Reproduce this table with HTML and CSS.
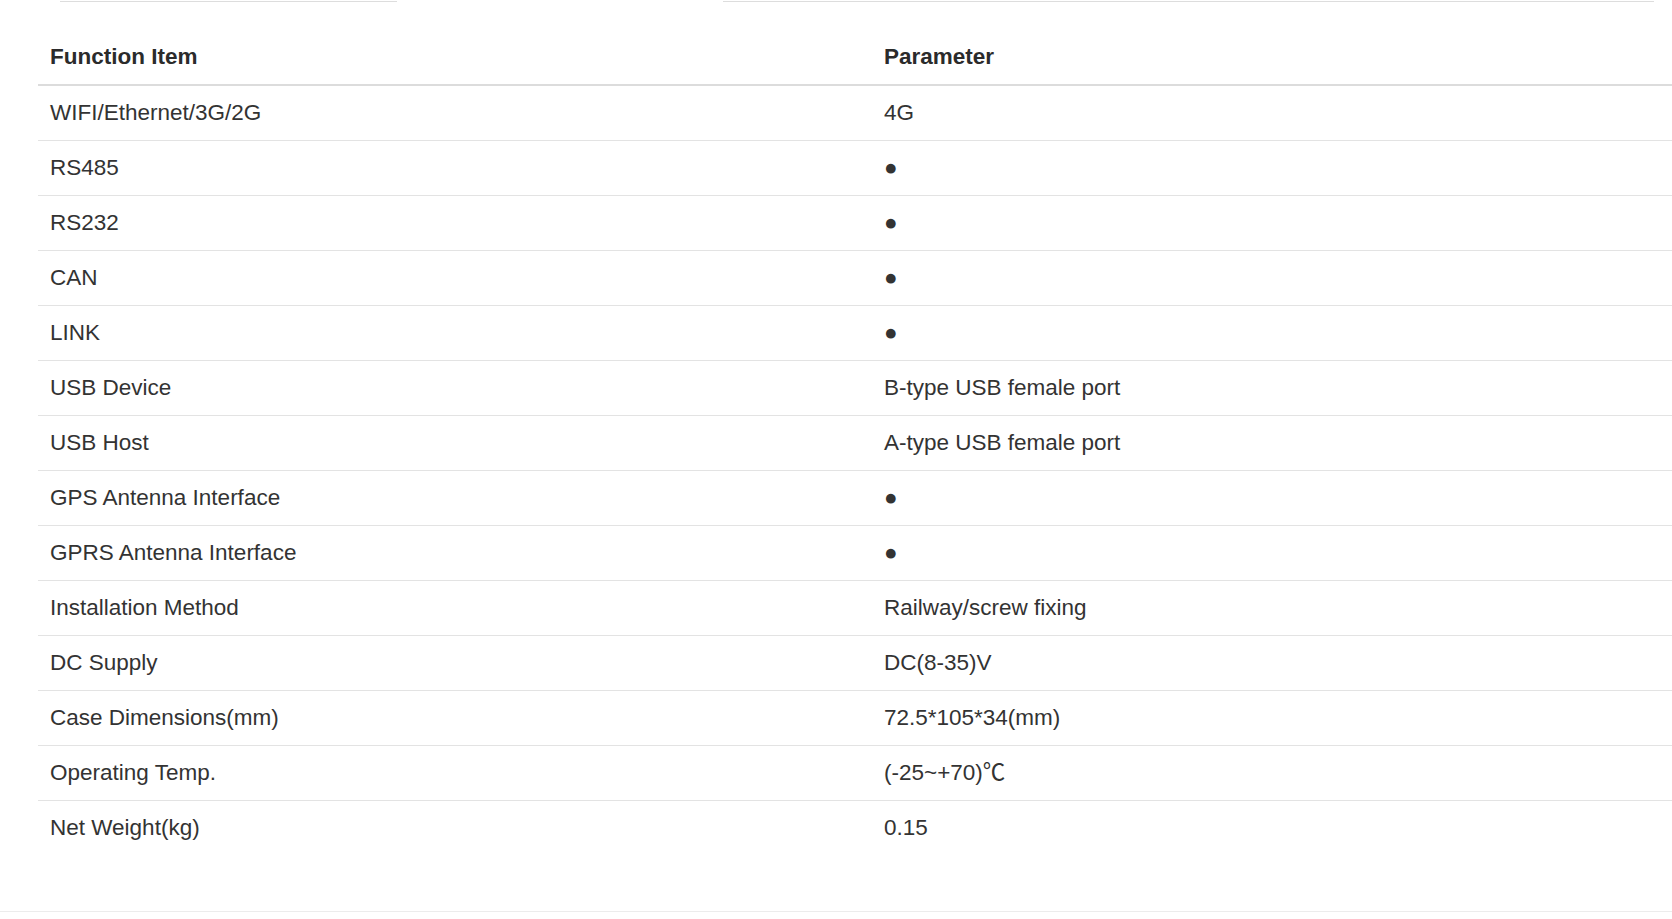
FILE: index.html
```html
<!DOCTYPE html>
<html lang="en">
<head>
<meta charset="utf-8">
<title>Parameters</title>
<link rel="stylesheet" href="styles.css">
</head>
<body>
<div class="page">
  <div class="tabs">
    <div class="tab-line tab-line-a"></div>
    <div class="tab-line tab-line-b"></div>
  </div>
  <table class="spec">
    <thead>
      <tr><th class="c1">Function Item</th><th>Parameter</th></tr>
    </thead>
    <tbody>
      <tr><td class="c1">WIFI/Ethernet/3G/2G</td><td>4G</td></tr>
      <tr><td class="c1">RS485</td><td>●</td></tr>
      <tr><td class="c1">RS232</td><td>●</td></tr>
      <tr><td class="c1">CAN</td><td>●</td></tr>
      <tr><td class="c1">LINK</td><td>●</td></tr>
      <tr><td class="c1">USB Device</td><td>B-type USB female port</td></tr>
      <tr><td class="c1">USB Host</td><td>A-type USB female port</td></tr>
      <tr><td class="c1">GPS Antenna Interface</td><td>●</td></tr>
      <tr><td class="c1">GPRS Antenna Interface</td><td>●</td></tr>
      <tr><td class="c1">Installation Method</td><td>Railway/screw fixing</td></tr>
      <tr><td class="c1">DC Supply</td><td>DC(8-35)V</td></tr>
      <tr><td class="c1">Case Dimensions(mm)</td><td>72.5*105*34(mm)</td></tr>
      <tr><td class="c1">Operating Temp.</td><td>(-25~+70)℃</td></tr>
      <tr class="last"><td class="c1">Net Weight(kg)</td><td>0.15</td></tr>
    </tbody>
  </table>
</div>
</body>
</html>
```

FILE: styles.css
```css
html, body {
  margin: 0;
  padding: 0;
  background: #ffffff;
}

body {
  font-family: "Liberation Sans", Arial, "Noto Sans CJK SC", sans-serif;
  color: #333333;
  overflow: hidden;
}

.page {
  padding-top: 1px;
  padding-bottom: 56px;
  border-bottom: 1px solid #ececec;
}

.tabs {
  display: flex;
  height: 1px;
}

.tab-line {
  height: 1px;
  background: #dddddd;
}

.tab-line-a {
  margin-left: 60px;
  width: 337px;
}

.tab-line-b {
  margin-left: 326px;
  width: 931px;
}

.spec {
  margin-top: 28px;
  margin-left: 38px;
  width: calc(100% - 38px);
  border-collapse: collapse;
  font-size: 22.5px;
  line-height: 34px;
}

.spec th,
.spec td {
  text-align: left;
  padding: 10px 12px;
  vertical-align: top;
}

.spec th {
  font-weight: bold;
  color: #2b2b2b;
  border-bottom: 2px solid #dcdcdc;
}

.spec td {
  border-bottom: 1px solid #e3e3e3;
  color: #333333;
}

.spec tr.last td {
  border-bottom: none;
}

.spec .c1 {
  width: 810px;
}
```
